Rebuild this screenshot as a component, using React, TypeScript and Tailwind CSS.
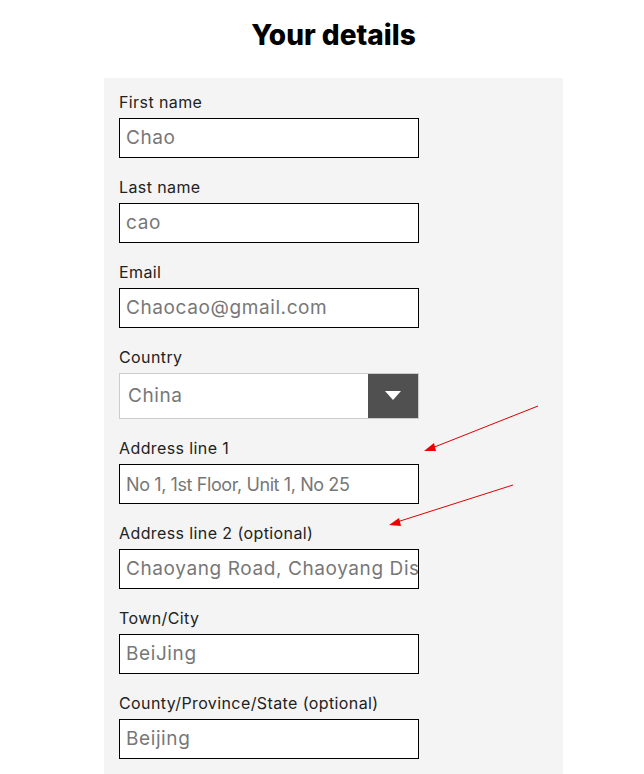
import React from "react";

type F = { label: string; value: string; tight?: boolean };

const fields1: F[] = [
  { label: "First name", value: "Chao" },
  { label: "Last name", value: "cao" },
  { label: "Email", value: "Chaocao@gmail.com" },
];
const fields2: F[] = [
  { label: "Address line 1", value: "No 1, 1st Floor, Unit 1, No 25", tight: true },
  { label: "Address line 2 (optional)", value: "Chaoyang Road, Chaoyang District" },
  { label: "Town/City", value: "BeiJing" },
  { label: "County/Province/State (optional)", value: "Beijing" },
];

function Field({ label, value, tight }: F) {
  return (
    <div className="flex flex-col">
      <label className="text-[16px] leading-6 tracking-[0.4px] text-[#222] mb-1">{label}</label>
      <div className="w-[300px] h-[40px] border border-black bg-white flex items-center pl-[6px] overflow-hidden whitespace-nowrap">
        <span
          className={
            tight
              ? "text-[18px] tracking-[-0.4px] text-[#777]"
              : "text-[19px] tracking-[0.6px] text-[#777]"
          }
        >
          {value}
        </span>
      </div>
    </div>
  );
}

export default function App() {
  return (
    <div
      className="relative w-[644px] h-[774px] bg-white overflow-hidden"
      style={{ fontFamily: "Inter, 'Open Sans', sans-serif" }}
    >
      <div className="ml-[104px] w-[459px]">
        <h1 className="h-[78px] flex items-center justify-center text-[28px] font-extrabold text-black pb-[8px]">
          Your details
        </h1>
        <div className="bg-[#f4f4f4] pt-[12px] pl-[15px] pb-[20px] flex flex-col gap-[17px]">
          {fields1.map((f) => (
            <Field key={f.label} {...f} />
          ))}
          <div className="flex flex-col">
            <label className="text-[16px] leading-6 tracking-[0.4px] text-[#222] mb-1">Country</label>
            <div className="w-[300px] h-[46px] border border-[#ccc] bg-white flex items-center">
              <span className="flex-1 pl-[8px] text-[19px] tracking-[0.6px] text-[#777]">China</span>
              <div className="w-[50px] h-full bg-[#505050] flex items-center justify-center">
                <svg width="16" height="10" viewBox="0 0 16 10">
                  <polygon points="0,0 16,0 8,9" fill="#fff" />
                </svg>
              </div>
            </div>
          </div>
          {fields2.map((f) => (
            <Field key={f.label} {...f} />
          ))}
        </div>
      </div>
      <svg className="absolute left-0 top-0 pointer-events-none" width="644" height="774">
        <line x1="538" y1="406" x2="432" y2="448" stroke="#d00" strokeWidth="1" />
        <polygon points="424,451 434,443 436,451" fill="#e00" />
        <line x1="513" y1="485" x2="397" y2="522" stroke="#d00" strokeWidth="1" />
        <polygon points="389,525 399,518 401,526" fill="#e00" />
      </svg>
    </div>
  );
}
